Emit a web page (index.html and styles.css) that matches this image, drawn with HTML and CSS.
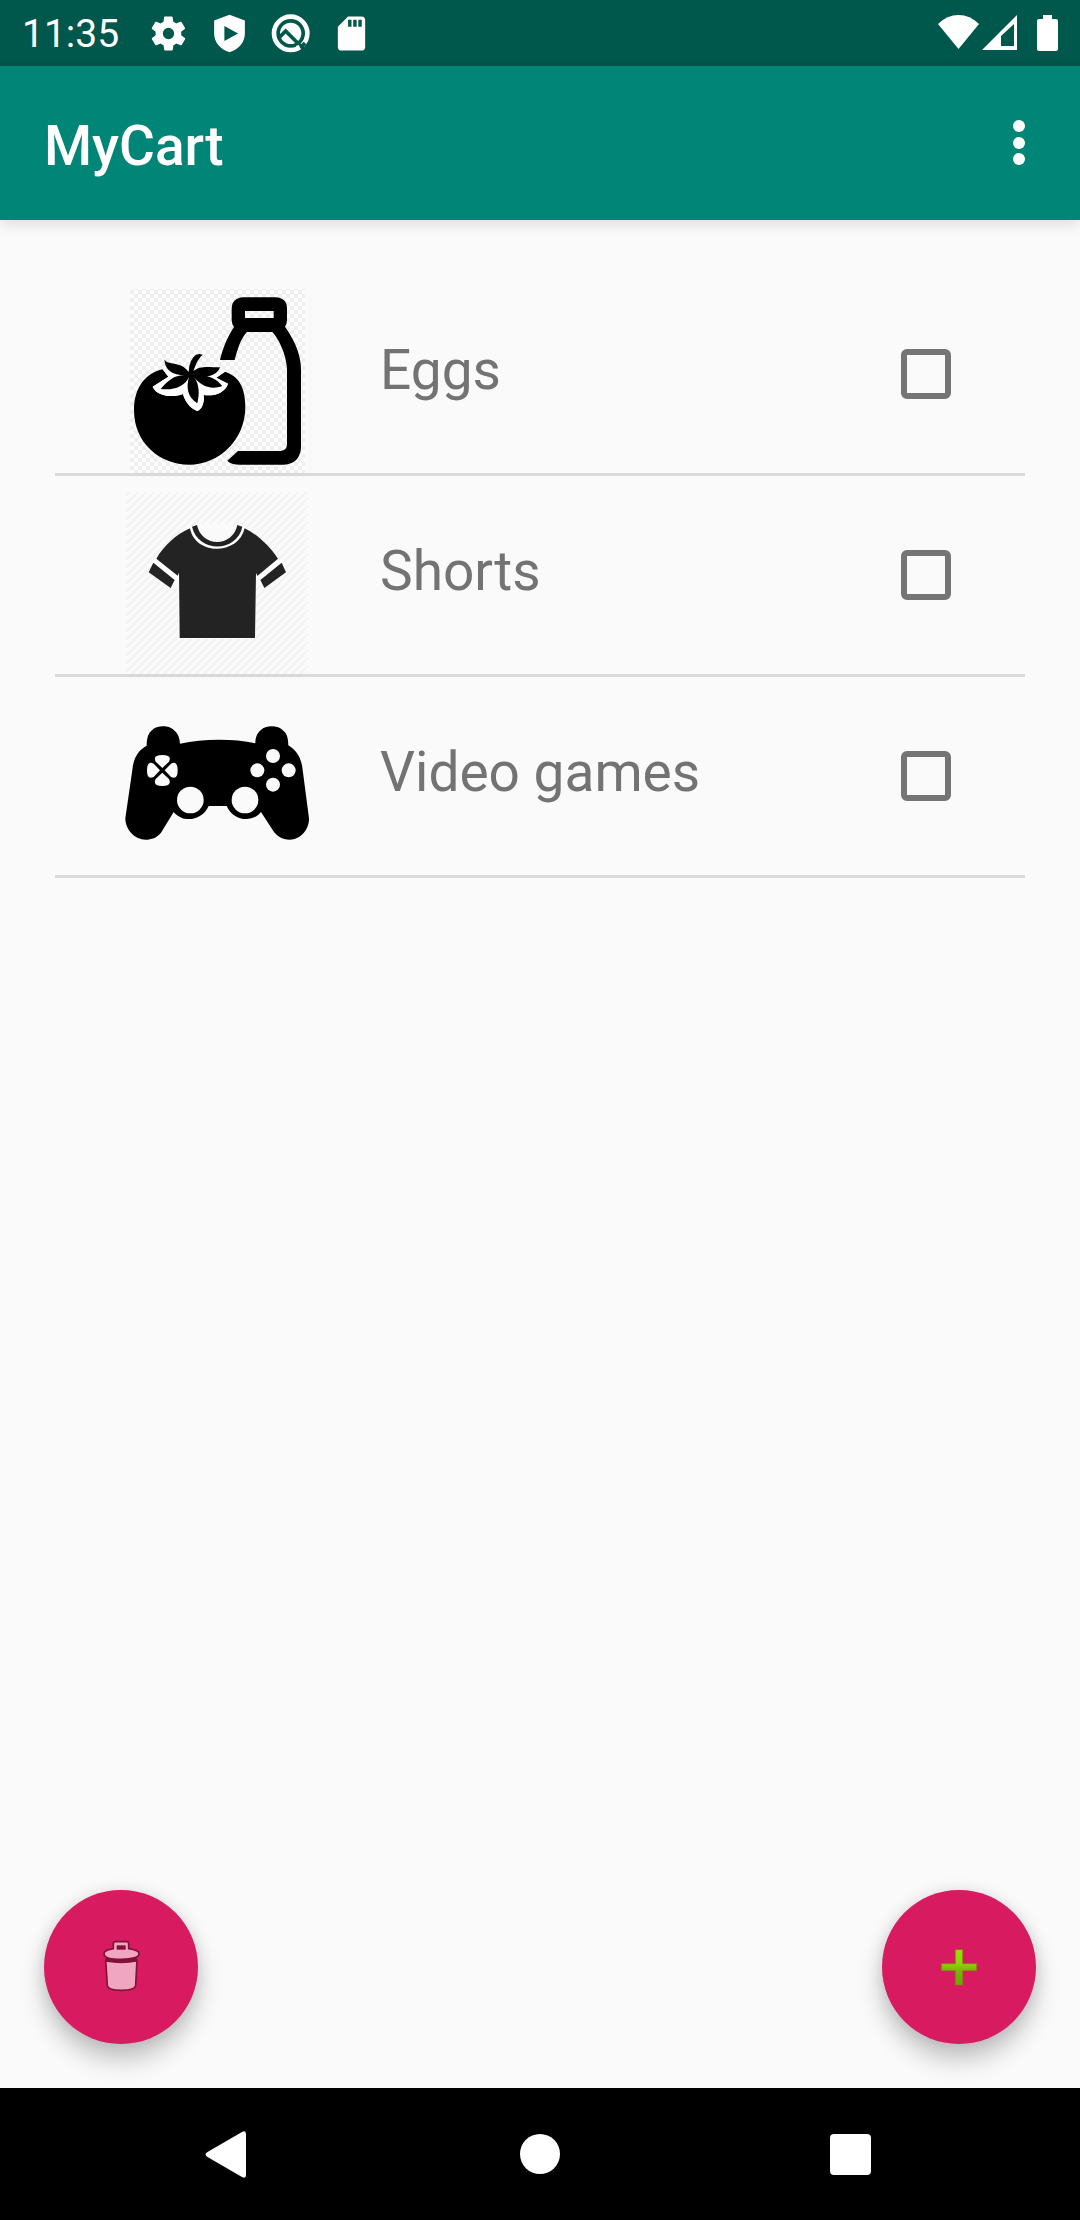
FILE: index.html
```html
<!DOCTYPE html>
<html lang="en">
<head>
<meta charset="utf-8">
<meta name="viewport" content="width=device-width, initial-scale=1">
<title>MyCart</title>
<link rel="stylesheet" href="styles.css">
</head>
<body>
<div class="status-bar">
  <span class="clock">11:35</span>
  <div class="notifications">
    <svg class="status-icon" viewBox="0 0 24 24" aria-hidden="true"><path d="M19.4 13a7.800 7.800 0 0 0 0-2l2.100-1.600a.5.5 0 0 0 .1-.7l-2-3.400a.5.5 0 0 0-.6-.2l-2.500 1a7.300 7.300 0 0 0-1.700-1l-.4-2.600a.5.5 0 0 0-.5-.5h-4a.5.5 0 0 0-.5.5L9.100 5.100a7.700 7.700 0 0 0-1.700 1l-2.500-1a.5.5 0 0 0-.6.200l-2 3.400a.5.5 0 0 0 .1.700L4.500 11a7.900 7.900 0 0 0 0 2l-2.100 1.600a.5.5 0 0 0-.1.700l2 3.400c.1.200.4.300.6.200l2.500-1c.5.400 1.100.7 1.700 1l.4 2.600c0 .3.200.5.500.5h4c.3 0 .5-.2.500-.5l.4-2.600a7.300 7.300 0 0 0 1.700-1l2.500 1c.2.100.5 0 .6-.2l2-3.400a.5.5 0 0 0-.1-.7zM12 15.300a3.300 3.300 0 1 1 0-6.600 3.300 3.300 0 0 1 0 6.600z"/></svg>
    <svg class="status-icon" viewBox="0 0 24 24" aria-hidden="true"><path fill-rule="evenodd" d="M12 1 3 4.400V12c0 5.200 3.800 9.500 9 11 5.200-1.500 9-5.800 9-11V4.400zM9 7.600 17 12l-8 4.400z"/></svg>
    <svg class="status-icon" viewBox="29 38 123 123" aria-hidden="true"><circle class="ring" cx="91" cy="99" r="50"/><circle cx="91" cy="99" r="32"/><path class="ring-gap" d="M54 114 76 92 130 146"/><path class="ring-gap" d="M122 140 134 128"/><path class="ring" d="M109 144 118 141"/></svg>
    <svg class="status-icon" viewBox="0 0 24 24" aria-hidden="true"><path fill-rule="evenodd" d="M18 2h-8L4 8v12c0 1.100.9 2 2 2h12c1.100 0 2-.9 2-2V4c0-1.100-.9-2-2-2zM10 4h2v4h-2zM13 4h2v4h-2zM16 4h2v4h-2z"/></svg>
  </div>
  <div class="connectivity">
    <svg class="wifi" viewBox="0 0 41 36" aria-hidden="true"><path d="M0 9Q9 0 20.500 0T41 9L20.500 34z"/></svg>
    <svg class="signal" viewBox="0 0 35 36" aria-hidden="true"><path fill-rule="evenodd" d="M35 0v35H0zM32 9 19 21v10h13z"/></svg>
    <svg class="battery" viewBox="0 0 21 36" aria-hidden="true"><path d="M6 0h9v4h4a2 2 0 0 1 2 2v28a2 2 0 0 1-2 2H2a2 2 0 0 1-2-2V6a2 2 0 0 1 2-2h4z"/></svg>
  </div>
</div>

<header class="app-bar">
  <h1 class="title">MyCart</h1>
  <button class="overflow" type="button" aria-label="More options">
    <svg class="overflow-icon" viewBox="0 0 66 66" aria-hidden="true"><circle cx="33" cy="16" r="6"/><circle cx="33" cy="33" r="6"/><circle cx="33" cy="49" r="6"/></svg>
  </button>
</header>

<main class="content">
  <ul class="cart">
    <li class="item">
      <svg class="picture" viewBox="45 57 552 552" aria-hidden="true">
        <defs><pattern id="checks" width="24" height="24" patternUnits="userSpaceOnUse"><path fill="#fdfdfd" d="M0 0h24v24H0z"/><path fill="#eee" d="M0 0h12v12H0zM12 12h12v12H12z"/></pattern></defs>
        <path fill="url(#checks)" d="M60 57h525v552H60z"/>
        <path fill-rule="evenodd" d="M400 82H497Q531 84 531 116V150Q531 162 525 170C560 220 573 260 573 300V535Q568 582 522 584H390Q362 584 352 572L384 543H512Q531 541 531 522V296C528 250 505 205 487 186H411C392 205 382 240 374 270H330C338 235 355 195 372 171Q365 162 365 150V116Q366 84 400 82zM405 123V144H491V123z"/>
        <path d="M158 298C110 308 72 350 72 420C72 520 150 584 238 584S406 510 406 410C406 350 385 318 345 305L319 323L354 341C345 367 315 380 281 375C284 400 275 418 262 423C240 415 225 395 219 372C185 385 140 378 128 350L175 320z"/>
        <path fill="#fff" d="M128 350C140 378 185 385 219 372C225 395 240 415 262 423C275 418 284 400 281 375C315 380 345 367 354 341L319 323L345 305L333 290L240 300L158 298L175 320z"/>
        <path d="M163 268C172 288 212 272 236 306L238 288Q248 252 268 252L278 254C262 268 255 290 250 304C270 286 295 292 330 292C322 318 285 325 260 316C300 315 320 328 337 348C300 362 270 345 252 321C270 345 268 375 262 400C232 382 228 350 237 321C224 350 190 362 152 357C175 330 195 314 226 316C185 316 165 300 163 268z"/>
      </svg>
      <label class="name" for="eggs">Eggs</label>
      <input class="tick" type="checkbox" id="eggs">
    </li>
    <li class="item">
      <svg class="picture" viewBox="45 30 552 552" aria-hidden="true">
        <defs><pattern id="hatch" width="24" height="24" patternUnits="userSpaceOnUse"><path stroke="#f1f1f1" stroke-width="5" d="M-3 27 27-3M-3 3 3-3M21 27 27 21"/></pattern></defs>
        <path fill="url(#hatch)" d="M51 36h544v546H51z"/>
        <path fill="#fff" d="M240 140 262 134H382L404 140 504 236 520 246 463 324 438 300V477H206V300L182 324 125 246z"/>
        <path fill="#fafafa" d="M262 133C275 204 368 204 382 133z"/>
        <path fill="#232323" d="M240 145C255 227 385 227 404 145C445 165 480 200 504 236L442 288L438 278L435 474H209L207 278L203 287L139 236C160 200 195 165 240 145zM246 140 261 135C275 203 368 203 382 135L397 140C380 219 265 219 246 140zM130 248 194 300 182 324 116 277zM515 248 451 300 463 324 528 277z"/>
      </svg>
      <label class="name" for="shorts">Shorts</label>
      <input class="tick" type="checkbox" id="shorts">
    </li>
    <li class="item">
      <svg class="picture" viewBox="45 3 552 552" aria-hidden="true">
        <path d="M110 167C110 145 115 128 127 120C140 105 180 105 193 122C205 130 209 145 210 161C280 146 370 146 436 160C436 145 440 130 453 120C467 105 505 105 520 122C532 130 535 150 535 166C560 182 575 205 578 240L597 385C598 420 570 449 540 449C515 449 500 438 488 420L453 366C425 400 370 393 350 348H296C276 393 218 400 191 366L153 428C140 443 125 449 107 449C75 449 46 420 46 385L67 240C70 205 85 180 110 167z"/>
        <g fill="#fafafa">
          <circle cx="241" cy="330" r="40"/><circle cx="405" cy="330" r="40"/>
          <circle cx="489" cy="198" r="21"/><circle cx="442" cy="241" r="21"/><circle cx="536" cy="241" r="21"/><circle cx="489" cy="284" r="21"/>
          <path d="M157 234 137 215Q127 195 157 195T177 215zM157 248 177 267Q187 288 157 288T137 267zM150 241 131 221Q111 211 111 241T131 261zM164 241 183 221Q203 211 203 241T183 261z"/>
        </g>
      </svg>
      <label class="name" for="video-games">Video games</label>
      <input class="tick" type="checkbox" id="video-games">
    </li>
  </ul>

  <div class="actions">
    <button class="fab" type="button" aria-label="Delete items">
      <svg class="fab-icon" viewBox="183 201 180 180" aria-hidden="true">
        <g fill="#f0a5c1" stroke="#821039" stroke-width="5" stroke-linejoin="round">
          <path d="M227 270 232 347Q234 361 274 361T317 347L321 270z"/>
          <path fill="#821039" d="M229 266H319V273Q274 281 229 273z"/>
          <path d="M250 236V221Q250 215 256 215H290Q296 215 296 221V236Q327 240 327 251C327 262 305 268 274 268S222 262 222 251Q222 240 250 236z"/>
          <path fill="#821039" stroke="none" d="M260 226h27v13h-27z"/>
        </g>
      </svg>
    </button>
    <button class="fab" type="button" aria-label="Add item">
      <svg class="fab-icon" viewBox="207 201 180 180" aria-hidden="true">
        <defs><linearGradient id="lime" x1="0" y1="0" x2="0" y2="1"><stop offset="0" stop-color="#9be000"/><stop offset="0.400" stop-color="#8cd400"/><stop offset="0.600" stop-color="#78b400"/><stop offset="1" stop-color="#66a800"/></linearGradient></defs>
        <path fill="url(#lime)" stroke="#8a7a20" stroke-width="2" stroke-linejoin="round" d="M286 239h22v42h42v21h-42v43h-22v-43h-42v-21h42z"/>
      </svg>
    </button>
  </div>
</main>

<nav class="nav-bar" aria-label="System">
  <button class="nav-button" type="button" aria-label="Back"><svg class="nav-icon" viewBox="0 0 60 60" aria-hidden="true"><path d="M8.500 28 43 8q4-2 4 2v41q0 4-4 2L8.500 33q-4-2.500 0-5z"/></svg></button>
  <button class="nav-button" type="button" aria-label="Home"><svg class="nav-icon" viewBox="0 0 60 60" aria-hidden="true"><circle cx="30" cy="30" r="20"/></svg></button>
  <button class="nav-button" type="button" aria-label="Recent apps"><svg class="nav-icon" viewBox="0 0 60 60" aria-hidden="true"><rect x="9" y="10" width="41" height="41" rx="4"/></svg></button>
</nav>
</body>
</html>
```
FILE: styles.css
```css
* {
  box-sizing: border-box;
}

body {
  margin: 0;
  min-height: 100vh;
  display: flex;
  flex-direction: column;
  background: #fafafa;
  color: #737373;
  font-family: Roboto, "Noto Sans", sans-serif;
}

svg {
  display: block;
}

button {
  display: flex;
  align-items: center;
  justify-content: center;
  padding: 0;
  border: 0;
  background: none;
  cursor: pointer;
}

/* System status bar */
.status-bar {
  display: flex;
  align-items: center;
  height: 66px;
  padding: 0 22px;
  background: #00574b;
  color: #fff;
  fill: #fff;
}

.clock {
  width: 126px;
  padding-top: 2px;
  font-size: 39px;
  line-height: 46px;
}

.notifications {
  display: flex;
  gap: 20px;
}

.status-icon {
  width: 41px;
  height: 41px;
}

.ring {
  fill: none;
  stroke: #fff;
  stroke-width: 14;
}

.ring-gap {
  fill: none;
  stroke: #00574b;
  stroke-width: 11;
}

.connectivity {
  display: flex;
  margin-left: auto;
}

.wifi {
  width: 41px;
  height: 36px;
  margin-right: 3px;
}

.signal {
  width: 35px;
  height: 36px;
  margin-right: 20px;
}

.battery {
  width: 21px;
  height: 36px;
}

/* App bar */
.app-bar {
  display: flex;
  align-items: center;
  justify-content: space-between;
  height: 154px;
  padding: 0 28px 0 44px;
  background: #008577;
  box-shadow: 0 4px 14px rgba(0, 0, 0, 0.12);
  color: #fff;
}

.title {
  margin: 0;
  padding-top: 6px;
  font-size: 55px;
  font-weight: 500;
  line-height: 64px;
}

.overflow-icon {
  width: 66px;
  height: 66px;
  fill: #fff;
}

/* Shopping list */
.content {
  flex: 1;
  display: flex;
  flex-direction: column;
  justify-content: space-between;
}

.cart {
  margin: 0;
  padding: 55px 55px 0;
  list-style: none;
}

.item {
  display: flex;
  align-items: center;
  padding: 0 74px 0 70px;
  border-bottom: 3px solid #dadada;
}

.picture {
  width: 184px;
  height: 184px;
  margin-top: 14px;
}

.name {
  flex: 1;
  padding: 0 0 8px 71px;
  font-size: 55px;
  line-height: 64px;
}

.tick {
  appearance: none;
  width: 50px;
  height: 50px;
  margin: 0;
  border: 6px solid #757575;
  border-radius: 6px;
}

.tick:checked {
  border-color: #d81b60;
  background: #d81b60;
}

/* Floating buttons */
.actions {
  display: flex;
  justify-content: space-between;
  padding: 44px;
}

.fab {
  width: 154px;
  height: 154px;
  border-radius: 50%;
  background: #d81b60;
  box-shadow: 0 16px 24px rgba(0, 0, 0, 0.22), 0 0 16px rgba(0, 0, 0, 0.1);
}

.fab-icon {
  width: 60px;
  height: 60px;
}

/* System navigation */
.nav-bar {
  display: flex;
  height: 132px;
  padding: 0 73px;
  background: #000;
}

.nav-button {
  flex: 1;
}

.nav-icon {
  width: 60px;
  height: 60px;
  fill: #fff;
}
```
